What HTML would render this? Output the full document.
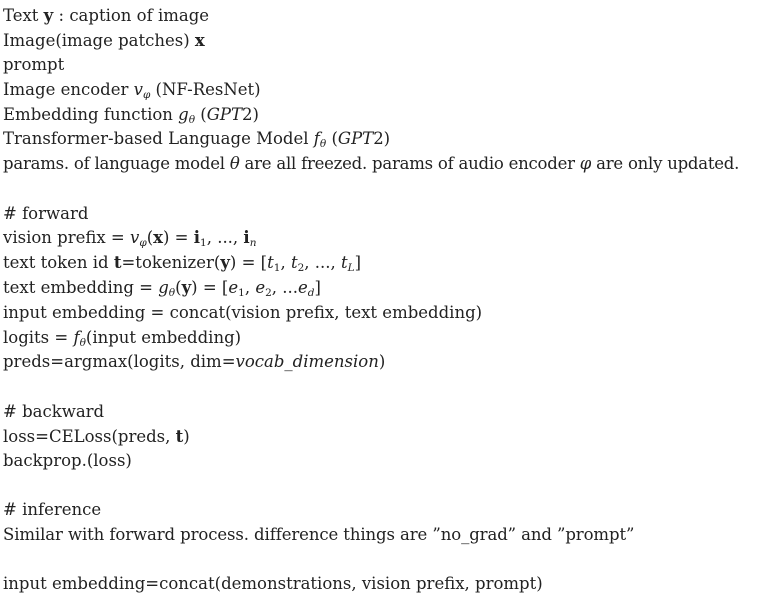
<!DOCTYPE html>
<html><head><meta charset="utf-8"><style>
body{margin:0;background:#fff;width:758px;height:595px;overflow:hidden;}
.l{position:absolute;left:3px;height:24px;line-height:24px;font-family:"DejaVu Serif","Liberation Serif",serif;font-size:16.5px;color:#222;white-space:nowrap;}
i{font-style:italic}
b{font-weight:bold}
sub{font-size:10.5px;line-height:0;vertical-align:-3px}
</style></head><body>
<div class="l" style="top:4px">Text <b>y</b> : caption of image</div>
<div class="l" style="top:29px">Image(image patches) <b>x</b></div>
<div class="l" style="top:53px">prompt</div>
<div class="l" style="top:78px">Image encoder <i>v</i><sub><i>φ</i></sub> (NF-ResNet)</div>
<div class="l" style="top:103px">Embedding function <i>g</i><sub><i>θ</i></sub> (<i>GPT</i>2)</div>
<div class="l" style="top:127px">Transformer-based Language Model <i>f</i><sub><i>θ</i></sub> (<i>GPT</i>2)</div>
<div class="l" style="top:152px;letter-spacing:-0.23px">params. of language model <i>θ</i> are all freezed. params of audio encoder <i>φ</i> are only updated.</div>
<div class="l" style="top:202px"># forward</div>
<div class="l" style="top:226px">vision prefix = <i>v</i><sub><i>φ</i></sub>(<b>x</b>) = <b>i</b><sub>1</sub>, ..., <b>i</b><sub><i>n</i></sub></div>
<div class="l" style="top:251px">text token id <b>t</b>=tokenizer(<b>y</b>) = [<i>t</i><sub>1</sub>, <i>t</i><sub>2</sub>, ..., <i>t</i><sub><i>L</i></sub>]</div>
<div class="l" style="top:276px">text embedding = <i>g</i><sub><i>θ</i></sub>(<b>y</b>) = [<i>e</i><sub>1</sub>, <i>e</i><sub>2</sub>, ...<i>e</i><sub><i>d</i></sub>]</div>
<div class="l" style="top:301px">input embedding = concat(vision prefix, text embedding)</div>
<div class="l" style="top:326px">logits = <i>f</i><sub><i>θ</i></sub>(input embedding)</div>
<div class="l" style="top:350px">preds=argmax(logits, dim=<i>vocab_dimension</i>)</div>
<div class="l" style="top:400px"># backward</div>
<div class="l" style="top:425px">loss=CELoss(preds, <b>t</b>)</div>
<div class="l" style="top:449px">backprop.(loss)</div>
<div class="l" style="top:498px"># inference</div>
<div class="l" style="top:523px;letter-spacing:-0.1px">Similar with forward process. difference things are ”no_grad” and ”prompt”</div>
<div class="l" style="top:572px">input embedding=concat(demonstrations, vision prefix, prompt)</div>
</body></html>
